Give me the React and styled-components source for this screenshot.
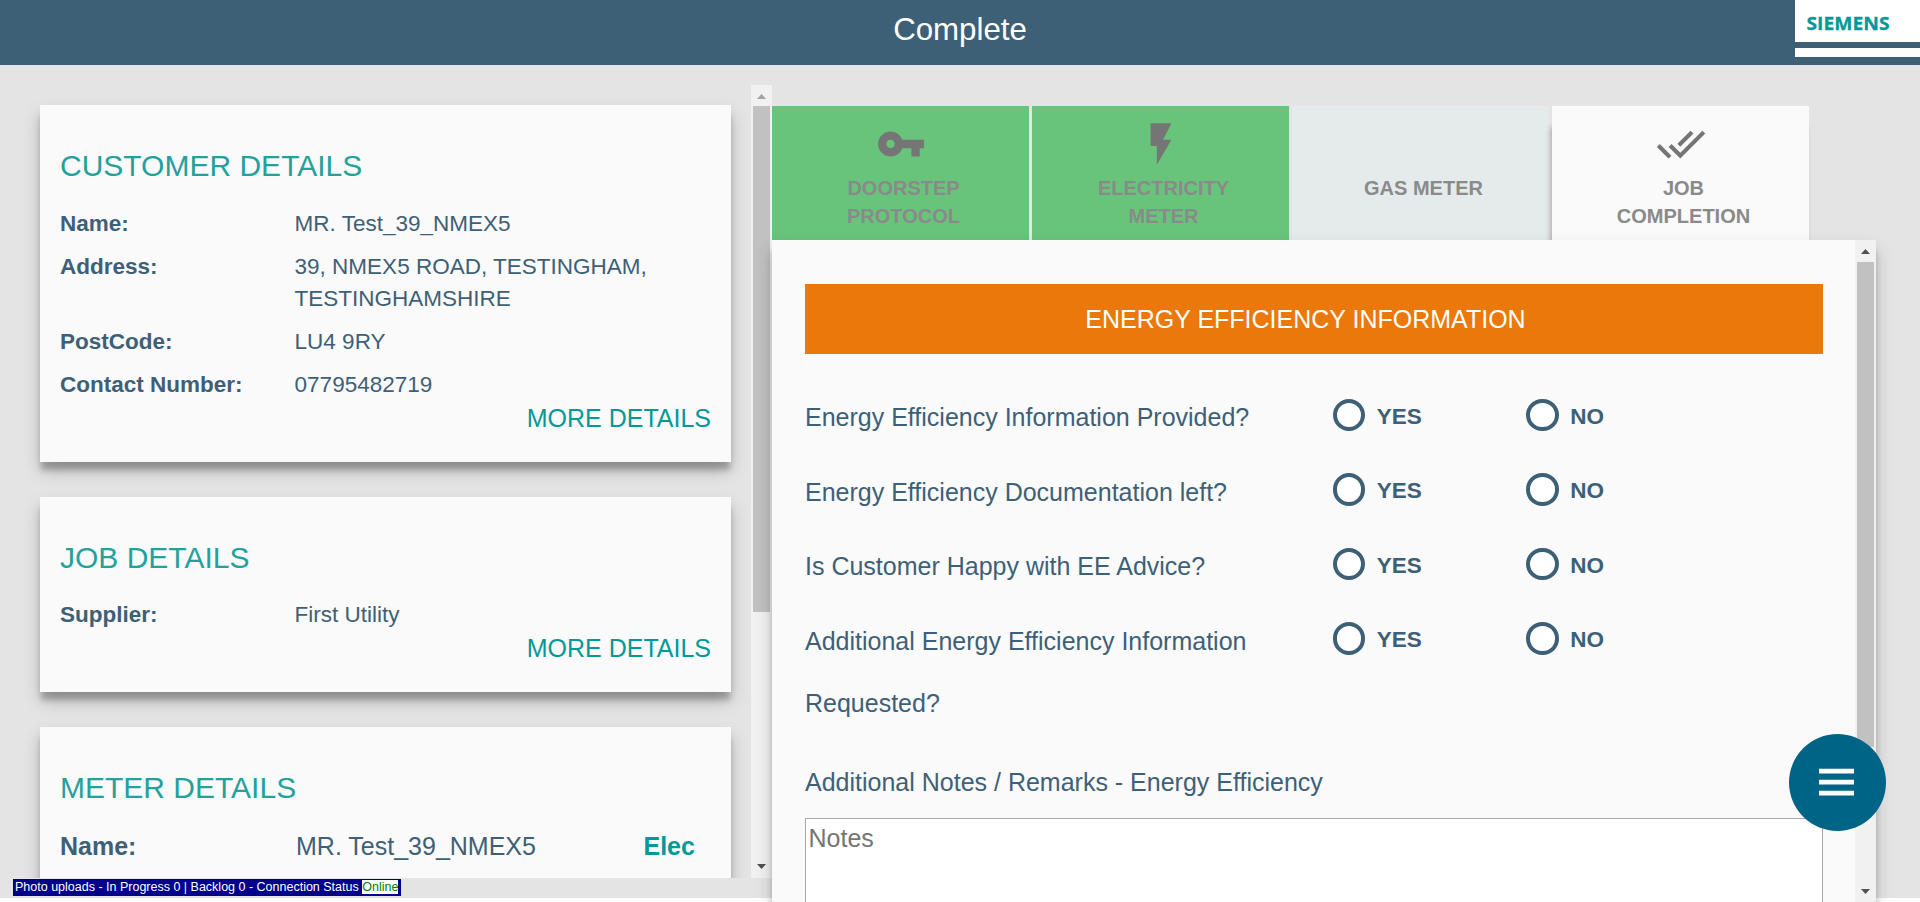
import React from "react";
import styled, { createGlobalStyle } from "styled-components";
import { MdVpnKey, MdFlashOn, MdDoneAll } from "react-icons/md";

const Global = createGlobalStyle`
  * { box-sizing: border-box; }
  html, body { margin: 0; height: 902px; overflow: hidden; background: #fff; }
  body { font-family: "Liberation Sans", Arial, sans-serif; font-size: 25px; color: #3e6077; }
`;

const cardShadow = "0 9px 6px -1px rgba(0,0,0,0.24), 0 9px 17px -1px rgba(0,0,0,0.22)";

const Page = styled.div`
  position: relative;
  display: flex;
  flex-direction: column;
  width: 1920px;
  height: 902px;
  overflow: hidden;
`;

const Header = styled.header`
  display: flex;
  align-items: flex-start;
  justify-content: flex-end;
  height: 65px;
  background: #3e6077;
`;

const Title = styled.h1`
  flex: 1;
  margin: 0;
  padding: 12px 0 0 125px;
  font-size: 31.25px;
  line-height: 36px;
  font-weight: 400;
  text-align: center;
  color: #fff;
`;

const Logo = styled.div`
  display: flex;
  flex-direction: column;
  width: 125px;
  height: 57px;
  background: #fff;
`;

const LogoMark = styled.div`
  height: 42px;
  padding: 6px 0 0 11px;
  svg { display: block; }
`;

const LogoRule = styled.div`
  height: 6px;
  background: #3e6077;
`;

const Body = styled.main`
  display: flex;
  height: 833px;
  background: #e4e4e4;
`;

const Left = styled.section`
  display: flex;
  width: 772px;
  height: 793px;
  margin-top: 20px;
`;

const Cards = styled.div`
  width: 751px;
  height: 793px;
  overflow: hidden;
  padding: 20px 20px 0 40px;
`;

const Card = styled.article`
  display: flex;
  flex-direction: column;
  margin-bottom: 35px;
  padding: 44px 20px 26.5px;
  background: #fafafa;
  box-shadow: ${cardShadow};
`;

const CardTitle = styled.h2`
  margin: 0 0 24.5px;
  font-size: 30px;
  line-height: 34px;
  font-weight: 400;
  color: #24a19d;
`;

const Field = styled.div`
  display: flex;
  margin-bottom: ${(p) => (p.$last ? 0 : "11.25px")};
  font-size: ${(p) => (p.$large ? "25px" : "22.5px")};
  line-height: ${(p) => (p.$large ? "35px" : "32px")};
`;

const Label = styled.span`
  width: ${(p) => (p.$large ? "236px" : "234.6px")};
  font-weight: 700;
`;

const Value = styled.span`
  width: ${(p) => (p.$large ? "347.5px" : "400px")};
`;

const Fuel = styled.span`
  color: #009999;
  font-weight: 700;
`;

const More = styled.a`
  align-self: flex-end;
  line-height: 34px;
  color: #009999;
`;

const Bar = styled.div`
  display: flex;
  flex-direction: column;
  flex: none;
  width: 21px;
  height: 100%;
  padding: 0 2px ${(p) => (p.$flush ? 0 : "1px")};
  background: #f1f1f1;
`;

const Thumb = styled.div`
  height: ${(p) => p.$h}px;
  background: #c1c1c1;
`;

const Arrow = styled.svg`
  display: block;
  flex: none;
  width: 17px;
  height: ${(p) => p.$h || 20}px;
  margin-top: ${(p) => (p.$end ? "auto" : 0)};
`;

const Right = styled.section`
  position: relative;
  width: 1104px;
  padding-top: 41px;
`;

const Tabs = styled.nav`
  display: flex;
  gap: 3px;
  height: 134px;
`;

const tones = { done: "#68c47a", idle: "#e4ebea", active: "#fafafa" };

const Tab = styled.div`
  width: 257px;
  padding: 13px 0 0;
  background: ${(p) => tones[p.$tone]};
  box-shadow: ${(p) => (p.$tone === "active" ? "-2px 20px 6px -1px rgba(0,0,0,0.28)" : "none")};
  text-align: center;
`;

const TabIcon = styled.div`
  height: 54.5px;
  color: #757575;
  svg { display: block; width: 50px; height: 50px; margin: 0 auto; }
`;

const TabLabel = styled.div`
  width: 146px;
  margin: 0 auto;
  padding-left: 6px;
  font-size: 20px;
  line-height: 28px;
  font-weight: 700;
  color: #8a8a8a;
`;

const Panel = styled.div`
  position: relative;
  display: flex;
  justify-content: space-between;
  height: 662px;
  background: #fafafa;
  box-shadow: ${cardShadow};
`;

const Form = styled.div`
  width: 1051px;
  padding: 44px 0 0 33px;
`;

const Banner = styled.div`
  height: 70px;
  padding-right: 17px;
  line-height: 70px;
  text-align: center;
  background: #eb780a;
  color: #fff;
`;

const Questions = styled.div`
  padding-top: 32px;
`;

const Question = styled.div`
  display: flex;
  margin-bottom: 12px;
`;

const Prompt = styled.div`
  width: 527.75px;
  padding-right: 60px;
  line-height: 62.5px;
`;

const Choice = styled.label`
  display: flex;
  align-items: center;
  width: 193.5px;
  height: 58px;
  font-size: 22.5px;
  font-weight: 700;
`;

const ChoiceText = styled.span`
  padding-top: 3px;
`;

const Ring = styled.span`
  width: 32.5px;
  height: 32.5px;
  margin-right: 11.5px;
  border: 4px solid #3e6077;
  border-radius: 50%;
  background: #fff;
`;

const NotesLabel = styled.div`
  padding-top: 4.25px;
  line-height: 62.5px;
`;

const Notes = styled.div`
  height: 140px;
  margin-top: 4.75px;
  padding: 4.5px 2.5px;
  border: 1px solid #a9a9a9;
  background: #fff;
  line-height: 29px;
  color: #757575;
`;

const Fab = styled.button`
  position: absolute;
  left: 1788.5px;
  top: 733.5px;
  display: flex;
  align-items: center;
  justify-content: center;
  width: 97px;
  height: 97px;
  padding: 0;
  border: 0;
  border-radius: 50%;
  background: #006487;
`;

const Status = styled.div`
  position: absolute;
  left: 13px;
  top: 879px;
  height: 17px;
  padding: 1px 3px 0 2px;
  background: #00008b;
  color: #fff;
  font-size: 12.5px;
  line-height: 14px;
  white-space: nowrap;
`;

const Online = styled.span`
  display: inline-block;
  background: #fff;
  color: #008000;
`;

function ScrollBar({ thumb, dim, first, flush }) {
  return (
    <Bar $flush={flush}>
      <Arrow $h={first} viewBox={`0 0 17 ${first}`}>
        <path d="M4 14h9l-4.5-5z" fill={dim ? "#a3a3a3" : "#505050"} />
      </Arrow>
      <Thumb $h={thumb} />
      <Arrow $end viewBox="0 0 17 20">
        <path d="M4 7h9l-4.5 5z" fill="#505050" />
      </Arrow>
    </Bar>
  );
}

const customer = [
  ["Name:", "MR. Test_39_NMEX5"],
  ["Address:", "39, NMEX5 ROAD, TESTINGHAM, TESTINGHAMSHIRE"],
  ["PostCode:", "LU4 9RY"],
  ["Contact Number:", "07795482719"],
];

function DetailCard({ title, fields }) {
  return (
    <Card>
      <CardTitle>{title}</CardTitle>
      {fields.map(([label, value], i) => (
        <Field key={label} $last={i === fields.length - 1}>
          <Label>{label}</Label>
          <Value>{value}</Value>
        </Field>
      ))}
      <More>MORE DETAILS</More>
    </Card>
  );
}

const questions = [
  "Energy Efficiency Information Provided?",
  "Energy Efficiency Documentation left?",
  "Is Customer Happy with EE Advice?",
  "Additional Energy Efficiency Information Requested?",
];

export default function App() {
  return (
    <Page>
      <Global />
      <Header>
        <Title>Complete</Title>
        <Logo>
          <LogoMark>
            <svg width="100" height="36" viewBox="0 0 100 36">
              <text x="0.5" y="24" fontFamily="Open Sans, sans-serif" fontWeight="700" fontSize="18.4" textLength="83" lengthAdjust="spacingAndGlyphs" fill="#009999" stroke="#009999" strokeWidth="0.3">SIEMENS</text>
            </svg>
          </LogoMark>
          <LogoRule />
        </Logo>
      </Header>
      <Body>
        <Left>
          <Cards>
            <DetailCard title="CUSTOMER DETAILS" fields={customer} />
            <DetailCard title="JOB DETAILS" fields={[["Supplier:", "First Utility"]]} />
            <Card>
              <CardTitle>METER DETAILS</CardTitle>
              <Field $large>
                <Label $large>Name:</Label>
                <Value $large>MR. Test_39_NMEX5</Value>
                <Fuel>Elec</Fuel>
              </Field>
            </Card>
          </Cards>
          <ScrollBar thumb={506} dim first={21} />
        </Left>
        <Right>
          <Tabs>
            <Tab $tone="done">
              <TabIcon><MdVpnKey /></TabIcon>
              <TabLabel>DOORSTEP PROTOCOL</TabLabel>
            </Tab>
            <Tab $tone="done">
              <TabIcon><MdFlashOn /></TabIcon>
              <TabLabel>ELECTRICITY METER</TabLabel>
            </Tab>
            <Tab $tone="idle">
              <TabIcon />
              <TabLabel>GAS METER</TabLabel>
            </Tab>
            <Tab $tone="active">
              <TabIcon><MdDoneAll /></TabIcon>
              <TabLabel>JOB COMPLETION</TabLabel>
            </Tab>
          </Tabs>
          <Panel>
            <Form>
              <Banner>ENERGY EFFICIENCY INFORMATION</Banner>
              <Questions>
                {questions.map((q) => (
                  <Question key={q}>
                    <Prompt>{q}</Prompt>
                    <Choice><Ring /><ChoiceText>YES</ChoiceText></Choice>
                    <Choice><Ring /><ChoiceText>NO</ChoiceText></Choice>
                  </Question>
                ))}
              </Questions>
              <NotesLabel>Additional Notes / Remarks - Energy Efficiency</NotesLabel>
              <Notes>Notes</Notes>
            </Form>
            <ScrollBar thumb={485} first={22} flush />
          </Panel>
        </Right>
      </Body>
      <Status>
        Photo uploads - In Progress 0 | Backlog 0 - Connection Status <Online>Online</Online>
      </Status>
      <Fab aria-label="Menu">
        <svg width="36" height="28" viewBox="0 0 36 28" fill="#fff">
          <path d="M0 .7h35v4.7H0zM0 11.7h35v4.7H0zM0 22.7h35v4.7H0z" />
        </svg>
      </Fab>
    </Page>
  );
}
